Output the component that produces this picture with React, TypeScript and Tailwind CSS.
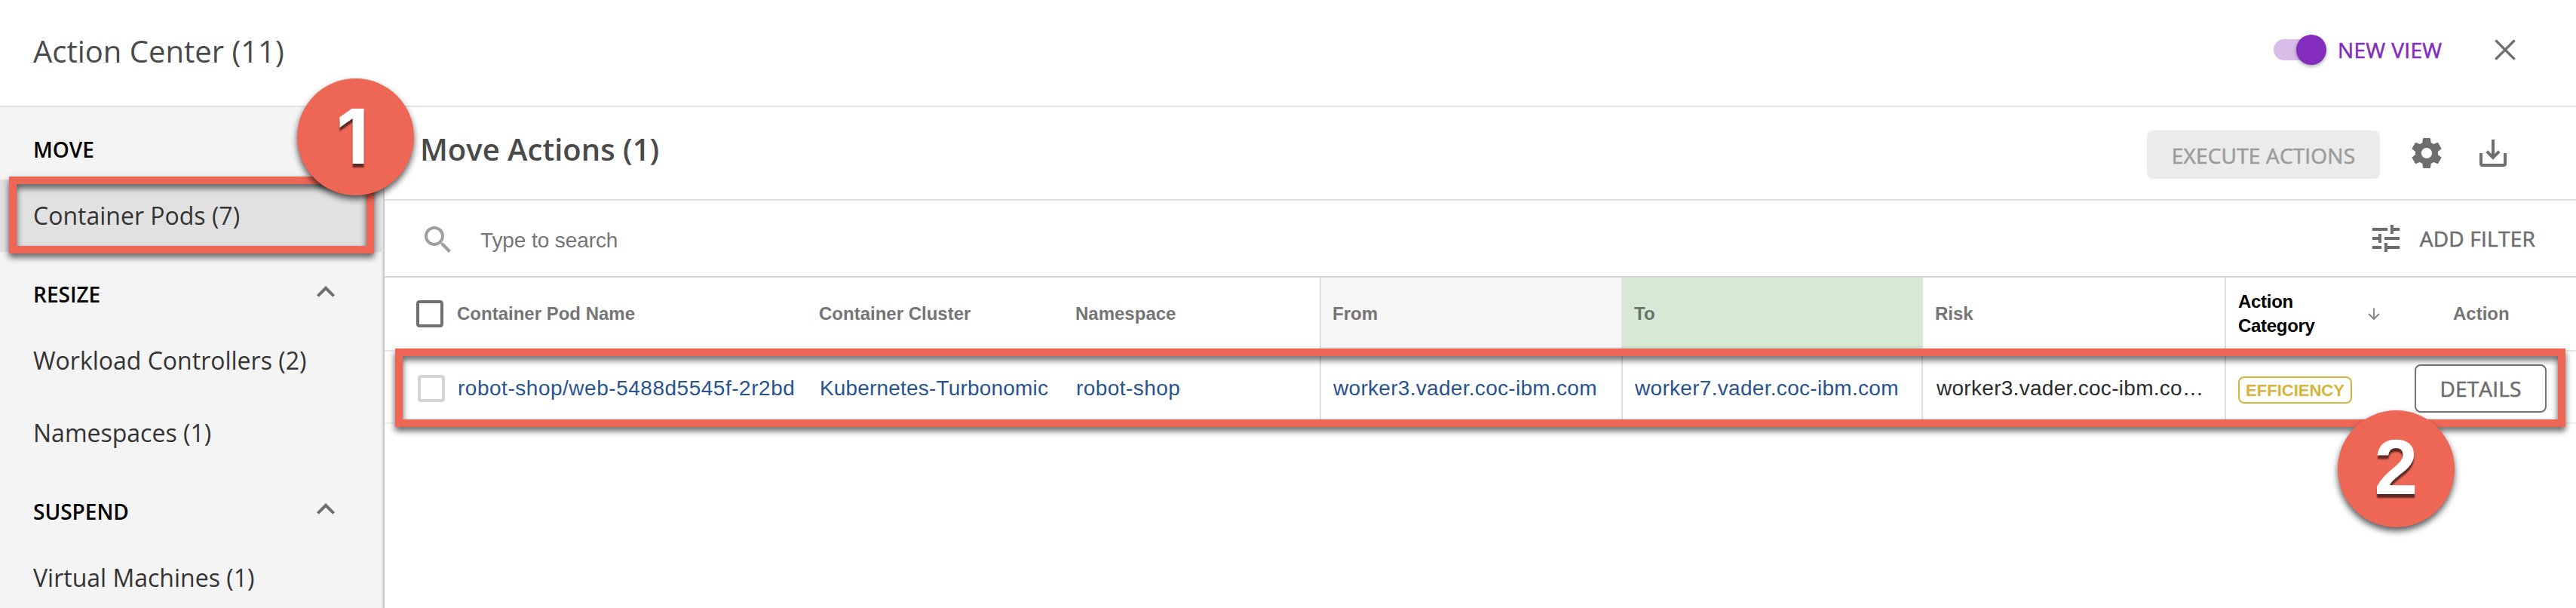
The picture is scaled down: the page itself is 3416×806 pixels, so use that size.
import type { ReactNode } from 'react';
import { MdCheckBoxOutlineBlank, MdExpandLess, MdSearch, MdTune } from 'react-icons/md';

const SettingsIcon = () => (
  <svg viewBox="0 0 24 24" className="size-12 fill-[#6e6e6e]">
    <path d="M19.43 12.98c.04-.32.07-.64.07-.98s-.03-.66-.07-.98l2.11-1.65c.19-.15.24-.42.12-.64l-2-3.46c-.12-.22-.39-.3-.61-.22l-2.49 1c-.52-.4-1.08-.73-1.69-.98l-.38-2.65C14.46 2.18 14.25 2 14 2h-4c-.25 0-.46.18-.49.42l-.38 2.65c-.61.25-1.17.59-1.69.98l-2.49-1c-.23-.09-.49 0-.61.22l-2 3.46c-.13.22-.07.49.12.64l2.11 1.65c-.04.32-.07.65-.07.98s.03.66.07.98l-2.11 1.65c-.19.15-.24.42-.12.64l2 3.46c.12.22.39.3.61.22l2.49-1c.52.4 1.08.73 1.69.98l.38 2.65c.03.24.24.42.49.42h4c.25 0 .46-.18.49-.42l.38-2.65c.61-.25 1.17-.59 1.69-.98l2.49 1c.23.09.49 0 .61-.22l2-3.46c.12-.22.07-.49-.12-.64l-2.11-1.65zM12 15.5c-1.93 0-3.5-1.57-3.5-3.5s1.57-3.5 3.5-3.5 3.5 1.57 3.5 3.5-1.57 3.5-3.5 3.5z" />
  </svg>
);

const DownloadIcon = () => (
  <svg viewBox="0 0 48 48" className="size-12 fill-none stroke-[#6e6e6e] stroke-4">
    <path d="M8 24v14a2 2 0 0 0 2 2h28a2 2 0 0 0 2-2V24" />
    <path d="M24 6v23M15.8 21.6l8.2 8.2 8.2-8.2" />
  </svg>
);

const CloseIcon = () => (
  <svg viewBox="0 0 28 28" className="size-7 fill-none stroke-[#6e6e6e] stroke-[3.4]">
    <path d="M1.4 1.4l25.2 25.2M26.6 1.4L1.4 26.6" />
  </svg>
);

const ArrowDownIcon = () => (
  <svg viewBox="0 0 16 16" className="size-4 fill-none stroke-[#808080] stroke-[1.8]">
    <path d="M8 .5v14M1 8l7 7 7-7" />
  </svg>
);

function GroupTitle({ label, collapsible }: { label: string; collapsible?: boolean }) {
  return (
    <div className="flex h-24 items-center justify-between pl-11 pr-[50px] pt-4">
      <h3 className="text-[28px] font-semibold leading-10 text-black">{label}</h3>
      {collapsible && <MdExpandLess className="-mt-1.5 size-12 text-[#6e6e6e]" />}
    </div>
  );
}

function GroupItem({ label, selected }: { label: string; selected?: boolean }) {
  return (
    <div className={selected ? 'flex h-24 items-center bg-[#e1e1e1] pl-11' : 'flex h-24 items-center pl-11'}>
      <span className="text-[32px] leading-10 text-[#333]">{label}</span>
    </div>
  );
}

function Callout({ className, children }: { className: string; children: ReactNode }) {
  return (
    <div
      className={
        'absolute flex size-[155px] items-center justify-center rounded-full bg-[#ee6655] font-bold leading-none text-white drop-shadow-[0_5px_4px_rgba(0,0,0,0.65)] ' +
        className
      }
    >
      {children}
    </div>
  );
}

export default function App() {
  return (
    <div className="relative flex h-[806px] w-[3416px] flex-col overflow-hidden bg-white font-['Open_Sans','Noto_Sans',sans-serif]">
      <header className="flex h-[142px] shrink-0 items-center justify-between border-b-2 border-[#e3e3e3] pl-11 pr-20">
        <h1 className="-mt-1 text-[40px] leading-[56px] text-[#4a4a4a]">Action Center (11)</h1>
        <div className="-mt-2 flex items-center">
          <div className="flex h-7 w-[68px] items-center rounded-full bg-[#d9bde9] pl-[30px]">
            <div className="size-10 shrink-0 rounded-full bg-[#822dbd] shadow-[0_2px_5px_rgba(0,0,0,0.35)]" />
          </div>
          <span className="ml-[17px] w-[208px] text-[28px] leading-10 tracking-[0.35px] text-[#822dbd] [-webkit-text-stroke:0.6px_#822dbd]">
            NEW VIEW
          </span>
          <CloseIcon />
        </div>
      </header>

      <div className="flex min-h-0 flex-1">
        <nav className="w-[508px] shrink-0 border-r-2 border-[#e0e0e0] bg-[#f4f4f4]">
          <GroupTitle label="MOVE" />
          <GroupItem label="Container Pods (7)" selected />
          <GroupTitle label="RESIZE" collapsible />
          <GroupItem label="Workload Controllers (2)" />
          <GroupItem label="Namespaces (1)" />
          <GroupTitle label="SUSPEND" collapsible />
          <GroupItem label="Virtual Machines (1)" />
        </nav>

        <main className="flex flex-1 flex-col border-l-2 border-[#ccc]">
          <section className="flex h-[124px] shrink-0 items-center border-b-2 border-[#e3e3e3] pl-[47px] pr-[86px]">
            <h2 className="-mt-2.5 flex-1 text-[40px] font-semibold leading-[56px] text-[#4a4a4a]">Move Actions (1)</h2>
            <div className="flex items-center pt-1">
              <button className="h-16 w-[309px] rounded-lg bg-[#ebebeb] pt-0.5 text-[28px] tracking-[0.2px] text-[#9c9c9c] [-webkit-text-stroke:0.6px_#9c9c9c]">
                EXECUTE ACTIONS
              </button>
              <div className="ml-[38px] -mt-1 flex gap-10">
                <SettingsIcon />
                <DownloadIcon />
              </div>
            </div>
          </section>

          <section className="flex h-[102px] shrink-0 items-center border-b-2 border-[#d4d4d4] pl-[47px] pr-[54px]">
            <MdSearch className="mt-1 size-12 text-[#9e9e9e]" />
            <span className="ml-8 mt-1.5 flex-1 font-['Liberation_Sans',sans-serif] text-[28px] leading-8 tracking-[-0.1px] text-[#757575]">
              Type to search
            </span>
            <MdTune className="size-12 text-[#6e6e6e]" />
            <span className="ml-[21px] text-[28px] leading-10 tracking-[0.25px] text-[#6e6e6e] [-webkit-text-stroke:0.6px_#6e6e6e]">
              ADD FILTER
            </span>
          </section>

          <div className="font-['Liberation_Sans',sans-serif]">
            <div className="grid h-[98px] grid-cols-[96px_480px_340px_324px_400px_398px_402px_236px_1fr] border-b-2 border-[#e8e8e8] text-2xl font-bold text-[#757575]">
              <div className="flex items-center pl-[35.5px]">
                <MdCheckBoxOutlineBlank className="size-12 text-[#707070]" />
              </div>
              <div className="flex items-center">Container Pod Name</div>
              <div className="flex items-center">Container Cluster</div>
              <div className="flex items-center">Namespace</div>
              <div className="flex items-center border-l-2 border-[#e0e0e0] bg-[#f6f6f6] pl-[15px]">From</div>
              <div className="flex items-center border-l-2 border-[#e0e0e0] bg-[#d4e8d4] pl-[15px] text-[#66756a]">To</div>
              <div className="flex items-center border-l-2 border-[#e0e0e0] pl-4">Risk</div>
              <div className="flex items-center justify-between border-l-2 border-[#e0e0e0] pl-4 pr-[30px] leading-8 text-black">
                <span className="w-32 tracking-[-0.3px]">Action Category</span>
                <ArrowDownIcon />
              </div>
              <div className="flex items-center pl-[67px]">Action</div>
            </div>

            <div className="grid h-24 grid-cols-[96px_480px_340px_324px_400px_398px_402px_236px_1fr] border-b-2 border-[#f0f0f0] text-[28px] text-[#28538f]">
              <div className="flex items-center pl-[38px] pt-1">
                <MdCheckBoxOutlineBlank className="size-12 text-[#d4d4d4]" />
              </div>
              <div className="flex items-center pl-px pt-1 tracking-[0.52px]">robot-shop/web-5488d5545f-2r2bd</div>
              <div className="flex items-center pl-px pt-1 tracking-[0.18px]">Kubernetes-Turbonomic</div>
              <div className="flex items-center pl-px pt-1 tracking-[0.45px]">robot-shop</div>
              <div className="flex items-center border-l-2 border-[#e0e0e0] pl-4 pt-1 tracking-[0.3px]">
                worker3.vader.coc-ibm.com
              </div>
              <div className="flex items-center border-l-2 border-[#e0e0e0] pl-4 pt-1 tracking-[0.3px]">
                worker7.vader.coc-ibm.com
              </div>
              <div className="flex items-center border-l-2 border-[#e0e0e0] pl-[18px] pt-1 tracking-[0.29px] text-[#2b2b2b]">
                worker3.vader.coc-ibm.co…
              </div>
              <div className="flex items-center border-l-2 border-[#e0e0e0] pl-4 pt-2">
                <span className="flex h-9 w-[151px] items-center justify-center rounded-lg border-2 border-[#d6b43c] text-[22px] font-bold text-[#d6b43c]">
                  EFFICIENCY
                </span>
              </div>
              <div className="flex items-center pl-4 pt-1">
                <button className="h-16 w-[175px] rounded-lg border-2 border-[#737373] font-['Open_Sans',sans-serif] text-[28px] tracking-[0.2px] text-[#6e6e6e] [-webkit-text-stroke:0.6px_#6e6e6e]">
                  DETAILS
                </button>
              </div>
            </div>
          </div>
        </main>
      </div>

      <div className="absolute left-3 top-[234px] h-[102px] w-[484px] border-10 border-[#ee6655] drop-shadow-[0_5px_4px_rgba(0,0,0,0.65)]" />
      <div className="absolute left-[524px] top-[462px] h-[104px] w-[2878px] border-10 border-[#ee6655] drop-shadow-[0_5px_4px_rgba(0,0,0,0.65)]" />
      <Callout className="left-[394px] top-[104px]">
        <span className="pb-0.5 pr-2 font-['Inter',sans-serif] text-[100px] [text-shadow:0_5px_2px_rgba(0,0,0,0.6)]">1</span>
      </Callout>
      <Callout className="left-[3100px] top-[544px]">
        <span className="pb-1.5 font-['Liberation_Sans',sans-serif] text-[104px] [text-shadow:0_5px_2px_rgba(0,0,0,0.6)]">2</span>
      </Callout>
    </div>
  );
}
